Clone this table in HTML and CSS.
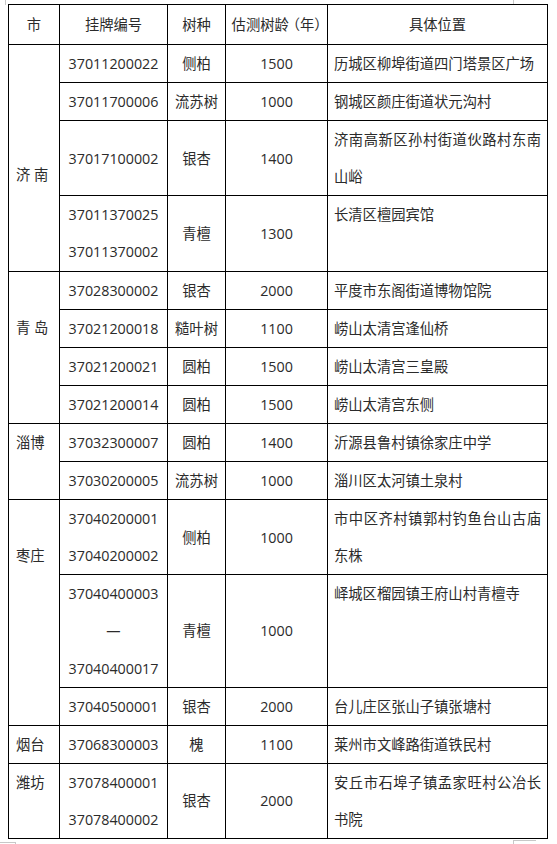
FILE: index.html
```html
<!DOCTYPE html>
<html lang="zh-CN">
<head>
<meta charset="utf-8">
<title>古树名录</title>
<link rel="stylesheet" href="styles.css">
</head>
<body>
<div class="page">
  <div class="mark mark-tl"></div>
  <div class="mark mark-tr"></div>
  <div class="mark mark-bl"></div>
  <div class="mark mark-br"></div>
  <table class="trees">
    <colgroup>
      <col class="c-city">
      <col class="c-code">
      <col class="c-kind">
      <col class="c-age">
      <col class="c-loc">
    </colgroup>
    <thead>
      <tr class="head">
        <th>市</th>
        <th>挂牌编号</th>
        <th>树种</th>
        <th>估测树龄<span class="paren">（年）</span></th>
        <th>具体位置</th>
      </tr>
    </thead>
    <tbody>
      <tr>
        <td class="city off3" rowspan="4">济 南</td>
        <td class="code">37011200022</td>
        <td class="kind">侧柏</td>
        <td class="age">1500</td>
        <td class="loc">历城区柳埠街道四门塔景区广场</td>
      </tr>
      <tr>
        <td class="code">37011700006</td>
        <td class="kind">流苏树</td>
        <td class="age">1000</td>
        <td class="loc">钢城区颜庄街道状元沟村</td>
      </tr>
      <tr>
        <td class="code">37017100002</td>
        <td class="kind">银杏</td>
        <td class="age">1400</td>
        <td class="loc">济南高新区孙村街道伙路村东南山峪</td>
      </tr>
      <tr>
        <td class="code">37011370025<br>37011370002</td>
        <td class="kind">青檀</td>
        <td class="age">1300</td>
        <td class="loc">长清区檀园宾馆</td>
      </tr>
      <tr>
        <td class="city off1" rowspan="4">青 岛</td>
        <td class="code">37028300002</td>
        <td class="kind">银杏</td>
        <td class="age">2000</td>
        <td class="loc">平度市东阁街道博物馆院</td>
      </tr>
      <tr>
        <td class="code">37021200018</td>
        <td class="kind">糙叶树</td>
        <td class="age">1100</td>
        <td class="loc">崂山太清宫逢仙桥</td>
      </tr>
      <tr>
        <td class="code">37021200021</td>
        <td class="kind">圆柏</td>
        <td class="age">1500</td>
        <td class="loc">崂山太清宫三皇殿</td>
      </tr>
      <tr>
        <td class="code">37021200014</td>
        <td class="kind">圆柏</td>
        <td class="age">1500</td>
        <td class="loc">崂山太清宫东侧</td>
      </tr>
      <tr>
        <td class="city" rowspan="2">淄博</td>
        <td class="code">37032300007</td>
        <td class="kind">圆柏</td>
        <td class="age">1400</td>
        <td class="loc">沂源县鲁村镇徐家庄中学</td>
      </tr>
      <tr>
        <td class="code">37030200005</td>
        <td class="kind">流苏树</td>
        <td class="age">1000</td>
        <td class="loc">淄川区太河镇土泉村</td>
      </tr>
      <tr>
        <td class="city off1" rowspan="3">枣庄</td>
        <td class="code">37040200001<br>37040200002</td>
        <td class="kind">侧柏</td>
        <td class="age">1000</td>
        <td class="loc">市中区齐村镇郭村钓鱼台山古庙东株</td>
      </tr>
      <tr>
        <td class="code">37040400003<br>—<br>37040400017</td>
        <td class="kind">青檀</td>
        <td class="age">1000</td>
        <td class="loc">峄城区榴园镇王府山村青檀寺</td>
      </tr>
      <tr>
        <td class="code">37040500001</td>
        <td class="kind">银杏</td>
        <td class="age">2000</td>
        <td class="loc">台儿庄区张山子镇张塘村</td>
      </tr>
      <tr>
        <td class="city">烟台</td>
        <td class="code">37068300003</td>
        <td class="kind">槐</td>
        <td class="age">1100</td>
        <td class="loc">莱州市文峰路街道铁民村</td>
      </tr>
      <tr>
        <td class="city">潍坊</td>
        <td class="code">37078400001<br>37078400002</td>
        <td class="kind">银杏</td>
        <td class="age">2000</td>
        <td class="loc">安丘市石埠子镇孟家旺村公冶长书院</td>
      </tr>
    </tbody>
  </table>
</div>
</body>
</html>
```
FILE: styles.css
```css
html, body {
  margin: 0;
  padding: 0;
  background: #ffffff;
}

.page {
  position: relative;
  width: 557px;
  height: 844px;
  overflow: hidden;
  padding-top: 4px;
  padding-left: 8px;
  box-sizing: border-box;
}

.trees {
  border-collapse: collapse;
  table-layout: fixed;
  width: 539px;
  font-family: "Open Sans", "Noto Sans CJK SC", "Microsoft YaHei", sans-serif;
  font-size: 14.3px;
  color: #2b2b2b;
  line-height: 37.1px;
}

.c-city { width: 51px; }
.c-code { width: 108px; }
.c-kind { width: 58px; }
.c-age { width: 102px; }
.c-loc { width: 220px; }

.trees th,
.trees td {
  border: 1px solid #000000;
  padding: 0;
  vertical-align: middle;
  text-align: center;
  font-weight: normal;
}

.trees .head th {
  line-height: 38px;
  white-space: nowrap;
}

.paren {
  font-family: "Noto Sans CJK SC", sans-serif;
  font-feature-settings: "halt" 1;
  margin-left: 4px;
}

.trees td.city {
  text-align: left;
  vertical-align: top;
  padding-left: 7px;
}

.trees td.city.off1 { padding-top: 37.1px; }
.trees td.city.off3 { padding-top: 111.3px; }

.trees td.loc {
  text-align: justify;
  vertical-align: top;
  padding: 0 6px 0 6px;
}

.mark {
  position: absolute;
  border-color: #c8c8c8;
  border-style: solid;
  border-width: 0;
}

.mark-tl {
  left: 5px;
  top: 0;
  width: 0;
  height: 5px;
  border-left-width: 1px;
}

.mark-tr {
  left: 513px;
  top: 0;
  width: 0;
  height: 4px;
  border-left-width: 1px;
}

.mark-bl {
  left: 0;
  top: 842px;
  width: 15px;
  height: 4px;
  border-top-width: 1px;
  border-right-width: 1px;
}

.mark-br {
  left: 513px;
  top: 840px;
  width: 22px;
  height: 6px;
  border-top-width: 1px;
  border-left-width: 1px;
}
```
